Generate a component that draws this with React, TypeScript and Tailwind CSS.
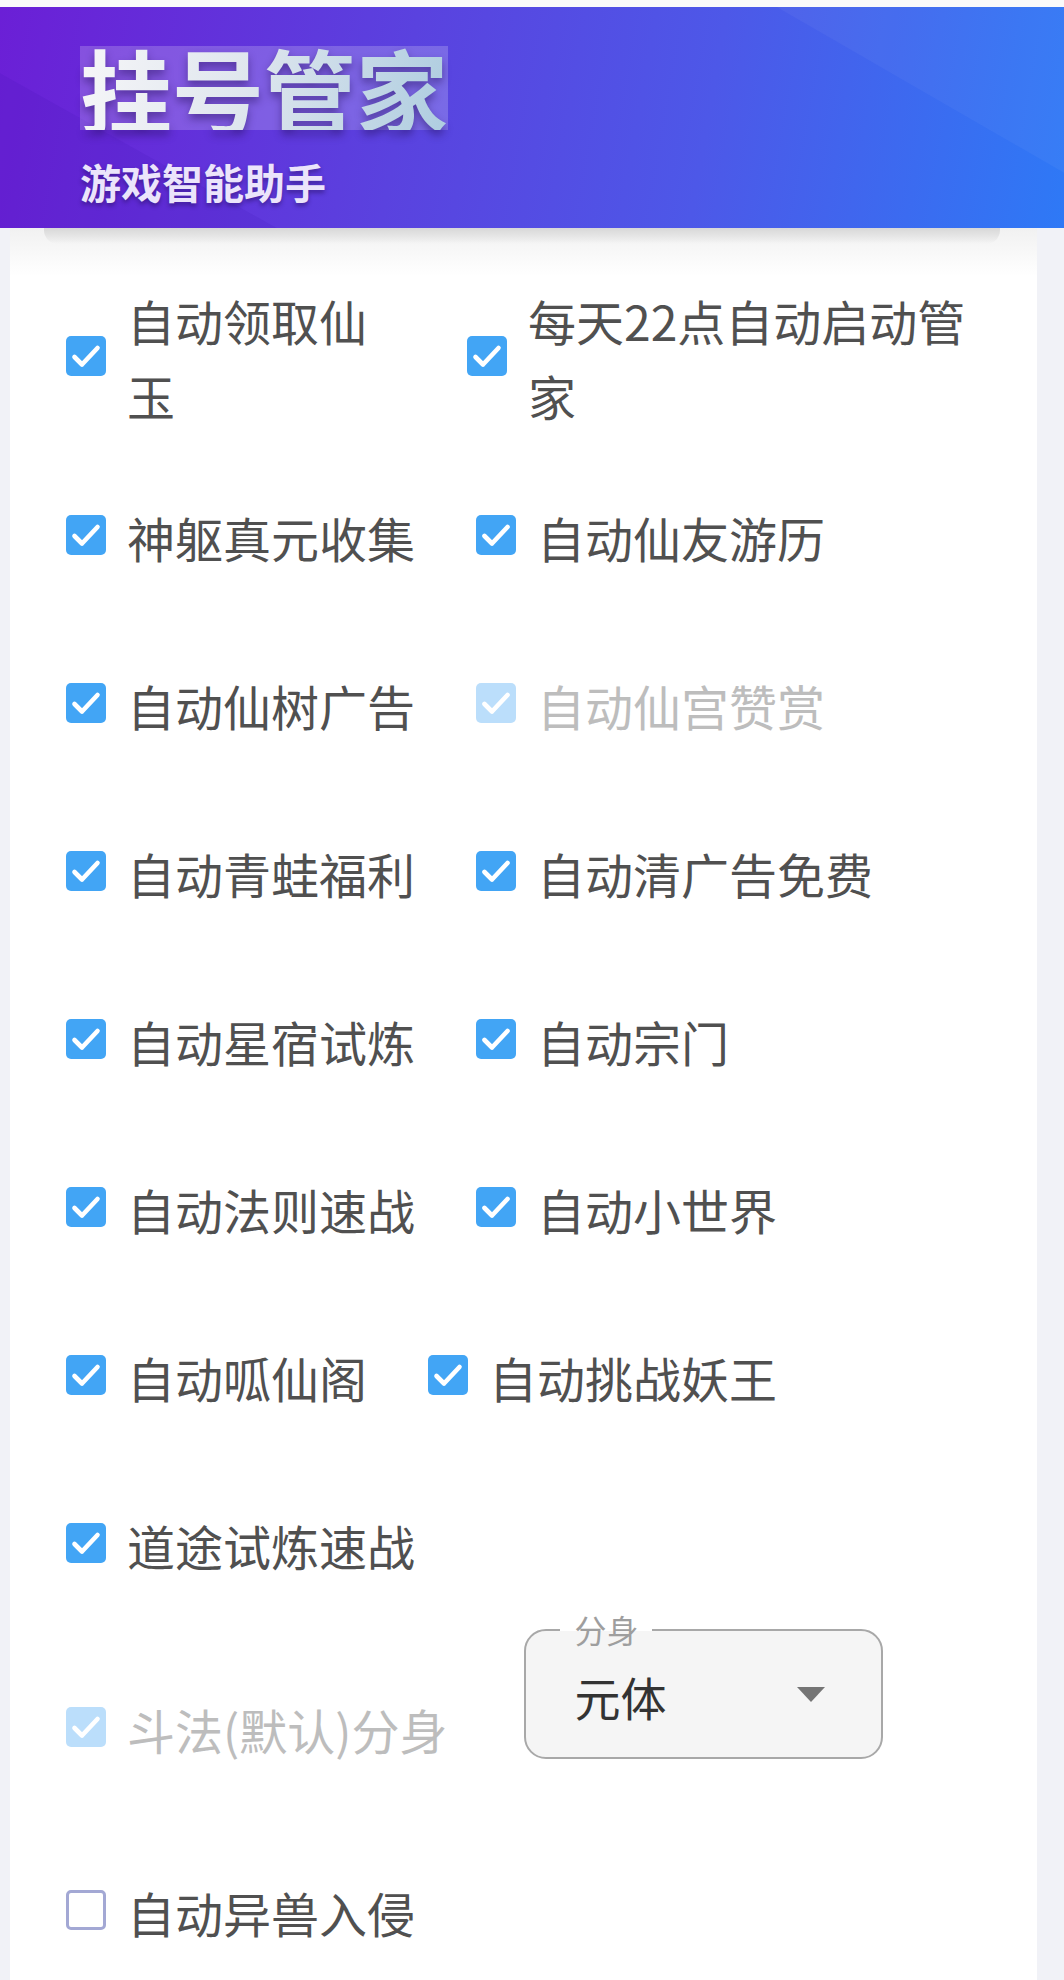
import React from "react";

type State = "on" | "off" | "disabled";

function Box({ state }: { state: State }) {
  if (state === "off") {
    return (
      <div className="w-[40px] h-[40px] shrink-0 rounded-[5px] border-[3px] border-[#a3a8d4] bg-white" />
    );
  }
  const bg = state === "on" ? "bg-[#42a5f5]" : "bg-[#bbdefb]";
  return (
    <div className={`w-[40px] h-[40px] shrink-0 rounded-[5px] ${bg} flex items-center justify-center`}>
      <svg width="40" height="40" viewBox="0 0 40 40">
        <path d="M8.5 21 L16 28.5 L31.5 12" fill="none" stroke="#ffffff" strokeWidth="4.6" strokeLinecap="round" strokeLinejoin="round" />
      </svg>
    </div>
  );
}

function Item({
  label,
  state = "on",
  textClass = "",
  first = false,
}: {
  label: string;
  state?: State;
  textClass?: string;
  first?: boolean;
}) {
  const color = state === "disabled" ? "text-[#bdbdbd]" : "text-[#505050]";
  return (
    <div className={`flex items-center ${first ? "mr-[61px]" : ""}`}>
      <Box state={state} />
      <span className={`ml-[21px] pt-[4px] text-[48px] leading-[75px] ${color} ${textClass}`}>{label}</span>
    </div>
  );
}

function Row({ children, h = "h-[168px]" }: { children: React.ReactNode; h?: string }) {
  return <div className={`flex items-center ${h}`}>{children}</div>;
}

export default function App() {
  return (
    <div
      className="min-h-[1980px] bg-[#f1f2f7] overflow-hidden"
      style={{ fontFamily: '"Noto Sans CJK SC", "Noto Sans", sans-serif' }}
    >
      <div className="h-[7px] bg-[#fafafa]" />
      {/* Header */}
      <div className="relative h-[221px] overflow-hidden bg-[linear-gradient(100deg,#6b1fd6_0%,#5a42df_38%,#4d58e8_66%,#2e79f6_100%)]">
        <div className="absolute inset-0 bg-white/[0.04] [clip-path:polygon(73%_0,100%_0,100%_75%)]" />
        <div className="absolute inset-0 bg-[#3a0fb0]/[0.12] [clip-path:polygon(0_30%,26%_100%,0_100%)]" />
        <div className="relative pl-[80px] pt-[39px]">
          <div className="inline-block bg-white/20 h-[84px]">
            <span className="inline-block [filter:drop-shadow(0_5px_4px_rgba(30,10,80,0.45))]">
              <span className="block text-[92px] leading-[84px] font-bold bg-[linear-gradient(100deg,#f6f6f8_0%,#dfe6ee_45%,#aecde0_100%)] bg-clip-text text-transparent">
                挂号管家
              </span>
            </span>
          </div>
          <div className="mt-[24px] text-[41px] leading-[48px] font-bold text-[#ebe4fb] [text-shadow:0_3px_4px_rgba(30,10,80,0.45)]">
            游戏智能助手
          </div>
        </div>
      </div>

      {/* Card */}
      <div className="relative ml-[10px] w-[1027px] min-h-[1760px] bg-[linear-gradient(to_bottom,#f1f1f1,#ffffff_48px)] pl-[56px] pt-[33px]">
        <div className="absolute left-[34px] right-[37px] top-0 h-[16px] rounded-b-[14px] bg-[linear-gradient(to_bottom,#d8d8d8,rgba(236,236,236,0))]" />
        <div className="relative">
          <Row h="h-[190px]">
            <Item label="自动领取仙玉" first textClass="w-[279px]" />
            <Item label="每天22点自动启动管家" textClass="w-[462px]" />
          </Row>
          <Row>
            <Item label="神躯真元收集" first />
            <Item label="自动仙友游历" />
          </Row>
          <Row>
            <Item label="自动仙树广告" first />
            <Item label="自动仙宫赞赏" state="disabled" />
          </Row>
          <Row>
            <Item label="自动青蛙福利" first />
            <Item label="自动清广告免费" />
          </Row>
          <Row>
            <Item label="自动星宿试炼" first />
            <Item label="自动宗门" />
          </Row>
          <Row>
            <Item label="自动法则速战" first />
            <Item label="自动小世界" />
          </Row>
          <Row>
            <Item label="自动呱仙阁" first />
            <Item label="自动挑战妖王" />
          </Row>
          <Row>
            <Item label="道途试炼速战" />
          </Row>
          <div className="flex items-start h-[199px]">
            <div className="mt-[16px] h-[168px] flex items-center">
              <Item label="斗法(默认)分身" state="disabled" />
            </div>
            <div className="relative ml-[77px] mt-[2px] w-[359px] h-[130px] rounded-[22px] border-2 border-[#a8a8a8] bg-[#f5f5f5] flex items-center pl-[48px] pr-[56px]">
              <span className="absolute left-[34px] top-[-22px] px-[14px] text-[32px] leading-[40px] text-[#9e9e9e] bg-[linear-gradient(to_bottom,#ffffff_55%,#f5f5f5_55%)]">
                分身
              </span>
              <span className="text-[46px] leading-[60px] text-[#333333] pt-[4px]">元体</span>
              <svg className="ml-auto" width="28" height="15" viewBox="0 0 28 15">
                <polygon points="0,0 28,0 14,15" fill="#757575" />
              </svg>
            </div>
          </div>
          <Row>
            <Item label="自动异兽入侵" state="off" />
          </Row>
        </div>
      </div>
    </div>
  );
}
